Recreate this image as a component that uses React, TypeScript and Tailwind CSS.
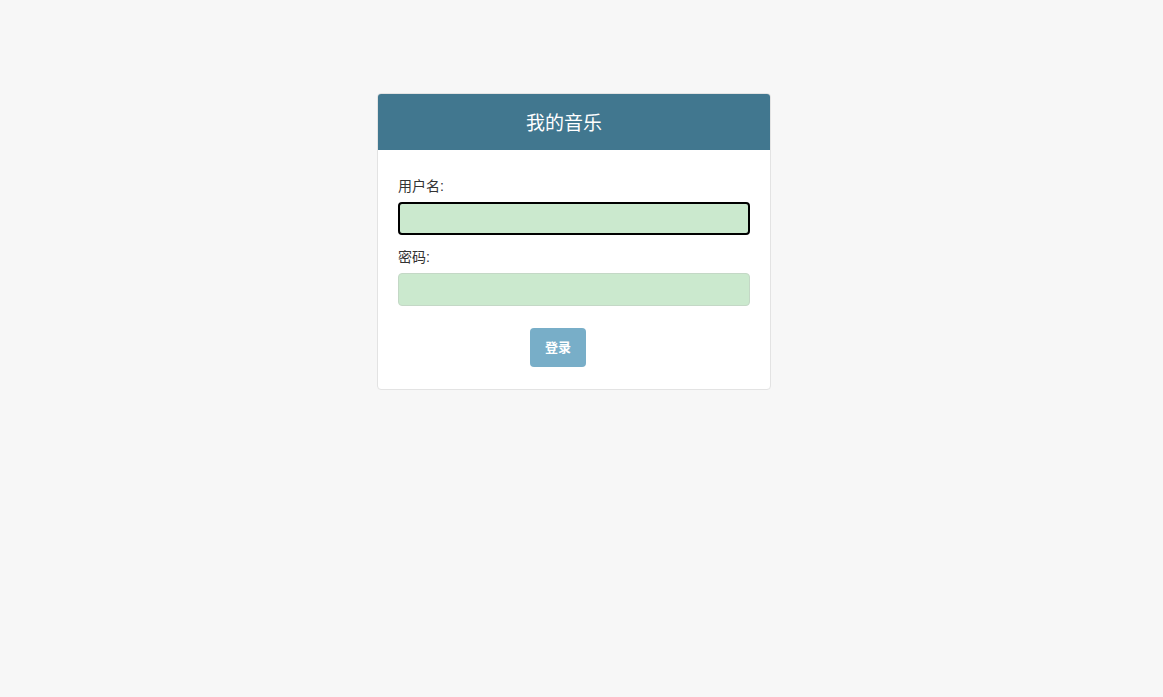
import { useState } from 'react'

export default function App() {
  const [form, setForm] = useState({ username: '', password: '' })

  const handleChange = (e: React.ChangeEvent<HTMLInputElement>) => {
    const { name, value } = e.target
    setForm(prev => ({ ...prev, [name]: value }))
  }

  return (
    <div
      className="min-h-[697px] bg-[#f7f7f7] pt-[93px] text-[#333]"
      style={{ fontFamily: '"Liberation Sans", "Noto Sans CJK SC", sans-serif' }}
    >
      <div className="ml-[377px] w-[394px] overflow-hidden rounded-[4px] border border-[#e3e3e3] bg-white">
        <div className="flex h-[56px] items-center justify-center bg-[#41778f] pt-1 pr-5 text-[19px] text-white">
          我的音乐
        </div>
        <form className="px-5 pt-[26px] pb-[22px]" onSubmit={e => e.preventDefault()}>
          <label className="block text-[14px] leading-5">用户名:</label>
          <input
            name="username"
            value={form.username}
            onChange={handleChange}
            className="mt-[6px] block h-[33px] w-full rounded-[4px] border-2 border-black bg-[#cbe9ce] px-2 text-[14px] outline-none"
          />
          <label className="mt-3 block text-[14px] leading-5">密码:</label>
          <input
            type="password"
            name="password"
            value={form.password}
            onChange={handleChange}
            className="mt-[6px] block h-[33px] w-full rounded-[4px] border border-[#c4d8c6] bg-[#cbe9ce] px-2 text-[14px] outline-none"
          />
          <div className="mt-[22px] flex justify-center pr-[32px]">
            <button
              type="submit"
              className="h-[39px] w-[56px] rounded-[4px] bg-[#78aec8] text-[13px] font-bold text-white"
            >
              登录
            </button>
          </div>
        </form>
      </div>
    </div>
  )
}
